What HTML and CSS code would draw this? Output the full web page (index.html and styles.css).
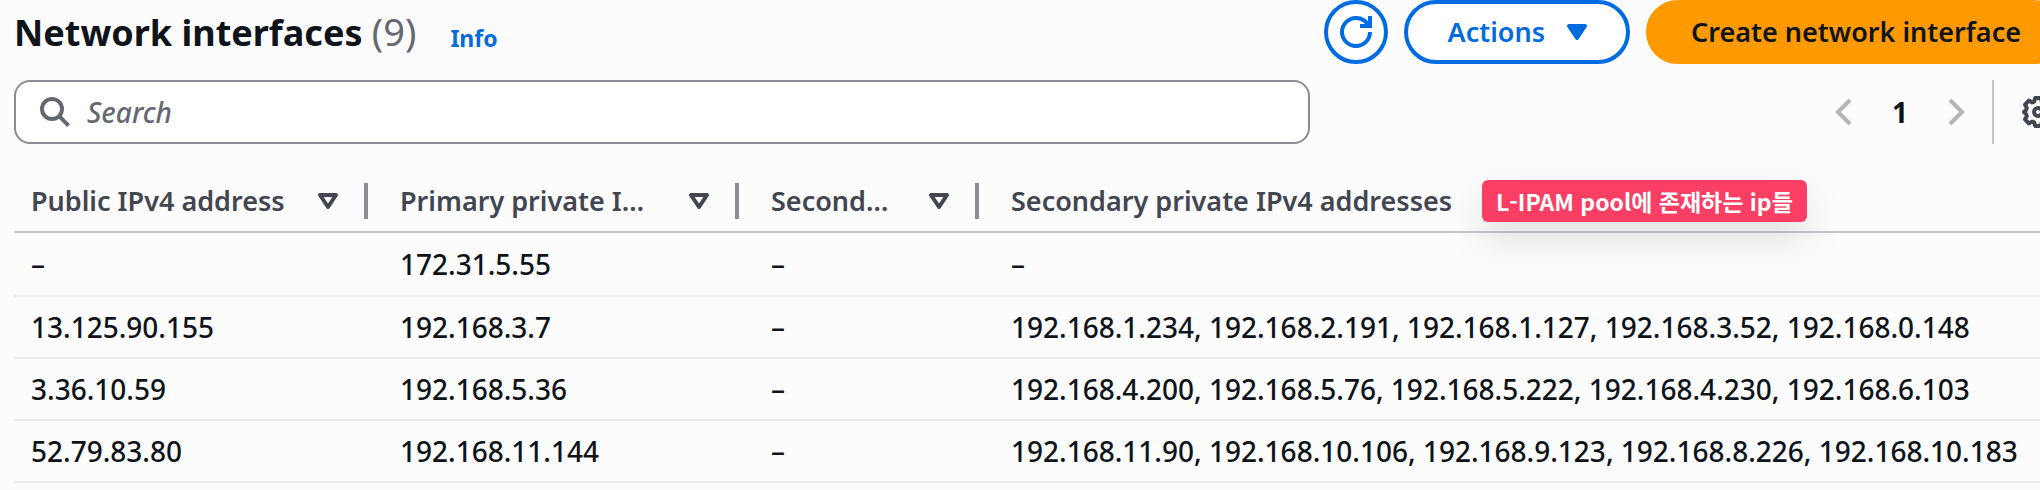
FILE: index.html
```html
<!DOCTYPE html>
<html lang="en">
<head>
<meta charset="utf-8">
<title>Network interfaces</title>
<link rel="stylesheet" href="styles.css">
</head>
<body>
<main class="panel">
  <header class="panel-header">
    <h1 class="title">Network interfaces <span class="count">(9)</span></h1>
    <a class="info" href="#info">Info</a>
    <div class="actions">
      <button class="btn btn-icon" type="button" aria-label="Refresh">
        <svg class="icon" viewBox="0 0 16 16" aria-hidden="true"><path d="M15 8c0 3.870-3.130 7-7 7s-7-3.130-7-7 3.130-7 7-7c2.790 0 5.200 1.630 6.330 4"/><path d="M10 5h5V0"/></svg>
      </button>
      <button class="btn btn-menu" type="button">Actions
        <svg class="icon icon-caret" viewBox="0 0 16 16" aria-hidden="true"><path d="M4 5h8l-4 6z"/></svg>
      </button>
      <button class="btn btn-primary" type="button">Create network interface</button>
    </div>
  </header>
  <div class="toolbar">
    <label class="search">
      <svg class="icon" viewBox="0 0 16 16" aria-hidden="true"><circle cx="6.500" cy="6.500" r="5"/><path d="m10.200 10.200 4.600 4.600"/></svg>
      <input class="search-input" type="search" placeholder="Search" aria-label="Search">
    </label>
    <div class="tools">
      <nav class="pagination" aria-label="Pagination">
        <button class="page-btn" type="button" aria-label="Previous page" disabled><svg class="icon" viewBox="0 0 16 16" aria-hidden="true"><path d="M11 2 5 8l6 6"/></svg></button>
        <button class="page-btn page-current" type="button">1</button>
        <button class="page-btn" type="button" aria-label="Next page" disabled><svg class="icon" viewBox="0 0 16 16" aria-hidden="true"><path d="m5 2 6 6-6 6"/></svg></button>
      </nav>
      <button class="settings" type="button" aria-label="Preferences">
        <svg class="icon" viewBox="0 0 16 16" aria-hidden="true"><path d="M6.600 1h2.800l.5 1.900 1.100.5 1.800-.9 1.700 2-1 1.700.4 1.100L15 8.100l-1.100 1-.4 1.100.9 1.700-2 1.900-1.600-.9-1 .4L9.400 15H6.600l-.5-1.800-1-.4-1.700.9-1.900-2 .9-1.600-.3-1L1 8l1.100-1.100.3-1-.9-1.600 1.900-2 1.700.9 1-.4z"/><circle cx="8" cy="8" r="2"/></svg>
      </button>
    </div>
  </div>
  <table class="grid">
    <colgroup><col class="col-public"><col class="col-primary"><col class="col-second"><col></colgroup>
    <thead>
      <tr>
        <th scope="col"><div class="head"><span class="label">Public IPv4 address</span><svg class="icon" viewBox="0 0 16 16" aria-hidden="true"><path d="M4 5h8l-4 6z"/></svg></div></th>
        <th scope="col"><div class="head"><span class="label">Primary private I…</span><svg class="icon" viewBox="0 0 16 16" aria-hidden="true"><path d="M4 5h8l-4 6z"/></svg></div></th>
        <th scope="col"><div class="head"><span class="label">Second…</span><svg class="icon" viewBox="0 0 16 16" aria-hidden="true"><path d="M4 5h8l-4 6z"/></svg></div></th>
        <th scope="col"><div class="head head-last"><span class="label">Secondary private IPv4 addresses</span><span class="note" lang="ko">L-IPAM pool에 존재하는 ip들</span></div></th>
      </tr>
    </thead>
    <tbody>
      <tr><td>–</td><td>172.31.5.55</td><td>–</td><td>–</td></tr>
      <tr><td>13.125.90.155</td><td>192.168.3.7</td><td>–</td><td>192.168.1.234, 192.168.2.191, 192.168.1.127, 192.168.3.52, 192.168.0.148</td></tr>
      <tr><td>3.36.10.59</td><td>192.168.5.36</td><td>–</td><td>192.168.4.200, 192.168.5.76, 192.168.5.222, 192.168.4.230, 192.168.6.103</td></tr>
      <tr><td>52.79.83.80</td><td>192.168.11.144</td><td>–</td><td>192.168.11.90, 192.168.10.106, 192.168.9.123, 192.168.8.226, 192.168.10.183</td></tr>
    </tbody>
  </table>
</main>
</body>
</html>
```
FILE: styles.css
```css
* { box-sizing: border-box; }
body {
  margin: 0;
  overflow: hidden;
  background: #fcfcfd;
  color: #0f141a;
  font: 500 28px/40px "Noto Sans", "Noto Sans CJK KR", sans-serif;
}
button, input { font: inherit; color: inherit; }
.panel { margin: 0 -26px 0 14px; }
.icon {
  flex: none;
  display: block;
  width: 32px;
  height: 32px;
  fill: none;
  stroke: currentColor;
  stroke-width: 2;
}
.panel-header { display: flex; align-items: center; height: 64px; }
.title { margin: 0; font-size: 36px; line-height: 48px; font-weight: 700; }
.count { color: #656871; font-size: 38px; font-weight: 400; }
.info {
  margin: 12px 0 0 34px;
  color: #006ce0;
  font-size: 23px;
  line-height: 32px;
  font-weight: 700;
  text-decoration: none;
}
.actions { display: flex; gap: 16px; margin-left: auto; }
.btn {
  display: flex;
  align-items: center;
  justify-content: center;
  height: 64px;
  border: 4px solid #006ce0;
  border-radius: 32px;
  background: #fff;
  color: #006ce0;
  font-size: 27px;
  font-weight: 600;
  white-space: nowrap;
}
.btn-icon { width: 64px; padding: 0; }
.btn-menu { gap: 16px; padding: 0 33px 0 40px; }
.icon-caret { fill: currentColor; stroke-linejoin: round; }
.btn-primary { padding: 0 41px; border-color: #ff9900; background: #ff9900; color: #0f141a; }
.toolbar { display: flex; justify-content: space-between; margin-top: 16px; }
.search {
  display: flex;
  align-items: center;
  gap: 16px;
  width: 63.15%;
  height: 64px;
  padding: 0 23px;
  border: 2px solid #8c8c94;
  border-radius: 16px;
  background: #fff;
  color: #656871;
}
.search-input { flex: 1; min-width: 0; padding: 0; border: 0; outline: 0; background: none; }
.search-input::placeholder { color: #656871; font-style: italic; opacity: 1; }
.tools { display: flex; align-items: center; }
.pagination { display: flex; align-items: center; gap: 24px; padding-right: 20px; }
.page-btn { display: flex; justify-content: center; width: 32px; padding: 0; border: 0; background: none; }
.page-btn:disabled { color: #b4b4bb; }
.page-current { font-weight: 700; }
.settings {
  display: flex;
  align-items: center;
  height: 64px;
  padding: 0 12px 0 28px;
  border: 0;
  border-left: 2px solid #c6c6cd;
  background: none;
  color: #424650;
}
.settings .icon { stroke-linejoin: round; }
.grid { width: 100%; margin-top: 26px; border-collapse: separate; border-spacing: 0; table-layout: fixed; }
.col-public { width: 354px; }
.col-primary { width: 371px; }
.col-second { width: 240px; }
th, td { padding: 0 0 0 32px; text-align: left; white-space: nowrap; }
th:first-child, td:first-child { padding-left: 17px; }
th { height: 63px; border-bottom: 2px solid #c6c6cd; color: #424650; font-size: 27px; font-weight: 600; }
td { height: 62px; border-bottom: 2px solid #ebebf0; }
tbody tr:first-child td { height: 64px; }
.head {
  display: flex;
  align-items: center;
  justify-content: space-between;
  gap: 16px;
  height: 36px;
  padding-right: 20px;
  border-right: 4px solid #8c8c94;
}
.head .icon { stroke-linejoin: round; }
.head-last { justify-content: flex-start; gap: 30px; padding-right: 0; border-right: 0; }
.note {
  padding: 1px 14px;
  border-radius: 6px;
  background: #fb3e64;
  color: #fff;
  font: 600 23px/40px "Noto Sans CJK KR", sans-serif;
  box-shadow: 0 16px 40px rgba(0, 0, 0, 0.12);
}
```
